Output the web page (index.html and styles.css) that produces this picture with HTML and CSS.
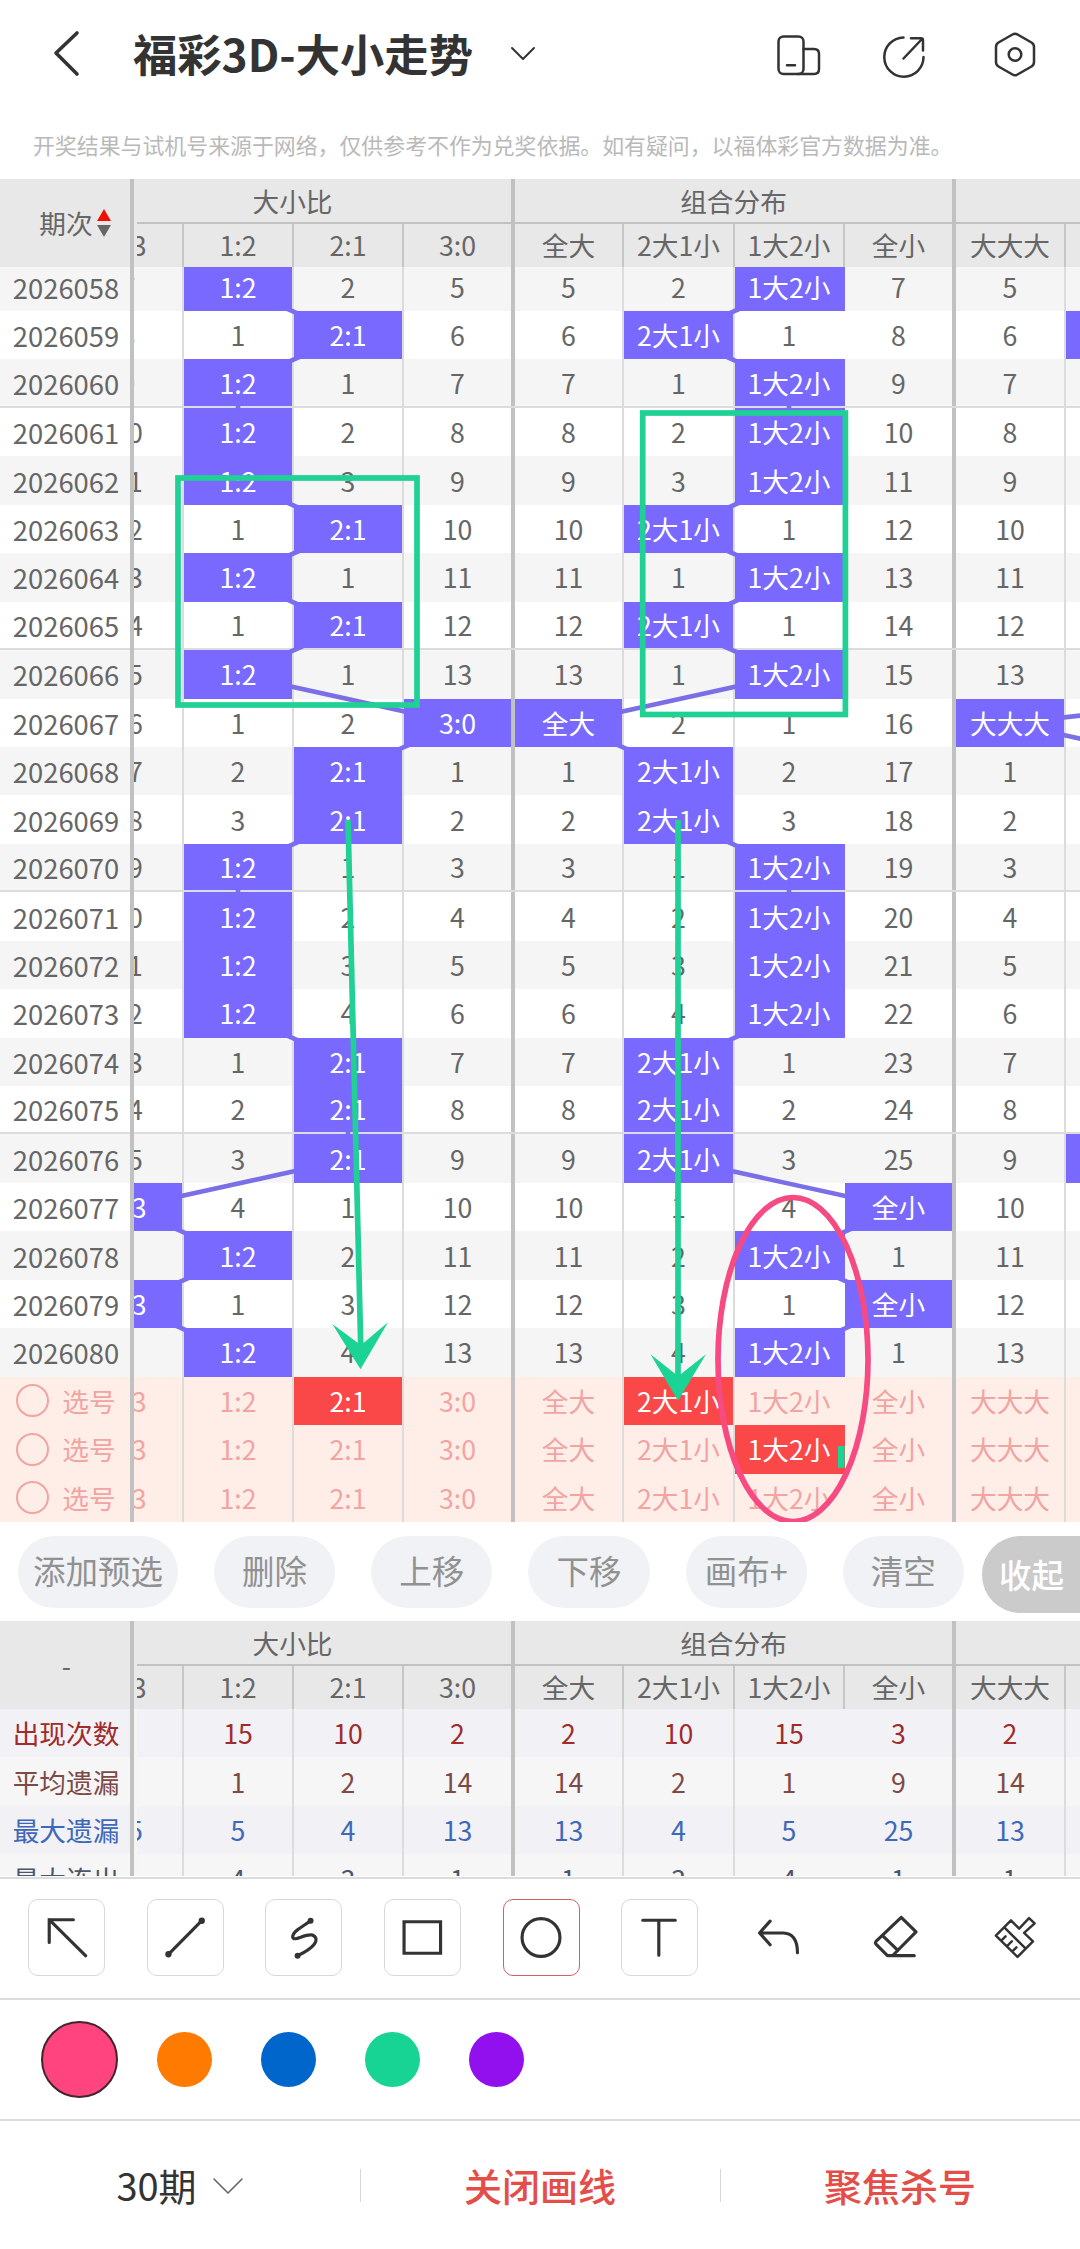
FILE: index.html
```html
<!DOCTYPE html>
<html lang="zh-CN">
<head>
    <meta charset="UTF-8">
    <meta name="viewport" content="width=device-width, initial-scale=1">
    <title>福彩3D-大小走势</title>
    <link rel="stylesheet" href="styles.css">
</head>
<body>
<header class="topbar">
    <svg class="back" width="30" height="50" viewBox="0 0 30 50"><path d="M26 4 5 24 26 45"/></svg>
    <h1>福彩3D-大小走势</h1>
    <svg class="drop" width="28" height="18" viewBox="0 0 28 18"><path d="M3 3 14 14 25 3"/></svg>
    <div class="actions">
        <svg width="48" height="48" viewBox="0 0 48 48"><rect x="4.5" y="6.5" width="25" height="37.5" rx="5"/><path d="M29.5 19H40q5 0 5 5V39q0 5-5 5H24M13 35.3h8"/></svg>
        <svg class="share" width="48" height="48" viewBox="0 0 48 48"><path d="M23.5 7.5A19.6 19.6 0 1 0 43.5 27M23.5 28.5 42 9M31 8.2H41q2 0 2 2V20.500"/></svg>
        <svg width="48" height="48" viewBox="0 0 48 48"><path d="M21.500 4.500Q24 3 26.500 4.500L40.500 12.500Q43 14 43 17V32Q43 35 40.500 36.500L26.500 44.500Q24 46 21.500 44.500L7.500 36.500Q5 35 5 32V17Q5 14 7.500 12.500Z"/><circle cx="24" cy="24.500" r="6.300"/></svg>
    </div>
</header>
<p class="notice">开奖结果与试机号来源于网络，仅供参考不作为兑奖依据。如有疑问，以福体彩官方数据为准。</p>

<section class="chart" id="trend">
    <div class="side">
        <div class="side-head">期次<span class="sort"><i class="up"></i><i class="down"></i></span></div>
        <div class="side-body"><div class="rows"></div></div>
    </div>
    <div class="scroll">
        <div class="head"></div>
        <div class="body">
            <div class="rows"></div>
            <svg class="links" width="1166" height="1260"></svg>
        </div>
    </div>
    <svg class="canvas" width="1080" height="1343" viewBox="0 179 1080 1343">
        <g class="green">
            <rect x="178" y="478" width="239" height="227"/>
            <rect x="642.700" y="413" width="202.700" height="301.500"/>
            <path d="M348 820 360.700 1345M678 820V1376"/>
            <path class="solid" d="M360.500 1369.300 332.300 1324 358 1343H363.500L388 1322.300ZM678 1400.700 650.500 1354.300 675.500 1374H681L706 1354.300ZM838 1446h6.600v21.700H838Z"/>
        </g>
        <ellipse class="pink" cx="793" cy="1359.500" rx="75" ry="162"/>
    </svg>
</section>

<nav class="edit">
    <button class="wide">添加预选</button>
    <button>删除</button>
    <button>上移</button>
    <button>下移</button>
    <button>画布+</button>
    <button>清空</button>
    <button class="fold">收起</button>
</nav>

<section class="chart" id="stats">
    <div class="side">
        <div class="side-head">-</div>
        <div class="side-body"><div class="rows"></div></div>
    </div>
    <div class="scroll">
        <div class="head"></div>
        <div class="body"><div class="rows"></div></div>
    </div>
</section>

<div class="tools">
    <svg class="tool" viewBox="0 0 76 76"><path class="sq" d="M45 20H20.500V43M20.500 20 57.500 56.500"/></svg>
    <svg class="tool" viewBox="0 0 76 76"><path d="M54.500 21 20.700 55"/><circle class="dot" cx="54.500" cy="21" r="3.200"/><circle class="dot" cx="20.700" cy="55" r="3.200"/></svg>
    <svg class="tool" viewBox="0 0 76 76"><path d="M45 21C38 27 27 31 27 37.500 28 43 39 34 47 35.500 56 40 48 49 32 56.500"/><circle class="dot" cx="45.200" cy="21" r="3"/><circle class="dot" cx="32" cy="56.500" r="3"/></svg>
    <svg class="tool" viewBox="0 0 76 76"><path class="sq" d="M19.300 22h37v32h-37Z"/></svg>
    <svg class="tool on" viewBox="0 0 76 76"><circle cx="37.500" cy="38" r="19.200"/></svg>
    <svg class="tool" viewBox="0 0 76 76"><path d="M21 20.500H54M37.300 20.500V56"/></svg>
    <svg class="tool bare" viewBox="0 0 76 76"><path d="M29.500 21.400 18.800 33.400 29.500 45.400M18.800 33.400H43Q57.200 34 57.200 53.400"/></svg>
    <svg class="tool bare" viewBox="0 0 76 76"><path d="M42.800 17.700 57.800 32.400 34.400 56M42.800 17.700 17.200 42Q16.200 43.400 17.200 44.800L28.800 56.400H56M24.400 36.700 39.400 51"/></svg>
    <svg class="tool bare thin" viewBox="0 0 76 76"><path d="M18.100 36 33.400 20.700 41.700 29 51.700 18.400 57.400 23.700 46.700 33.400 55.700 42 40.100 57.700ZM27.400 28.400 48.100 49M24.100 40.700l3.800-3.800M29.700 46.400l4.600-4.600M35.100 51.700l3.800-3.800"/></svg>
</div>

<div class="palette">
    <span class="color c1 on"></span>
    <span class="color c2"></span>
    <span class="color c3"></span>
    <span class="color c4"></span>
    <span class="color c5"></span>
</div>

<footer class="bottom">
    <div class="item">30期<svg width="32" height="20" viewBox="0 0 32 20"><path d="M2 3 16 17 30 3"/></svg></div>
    <div class="item red">关闭画线</div>
    <div class="item red">聚焦杀号</div>
</footer>
<script src="script.js"></script>
</body>
</html>
```
FILE: styles.css
```css
* {
    box-sizing: border-box;
}

body {
    margin: 0;
    width: 1080px;
    height: 2249px;
    overflow: hidden;
    background: #fff;
    color: #666;
    font-family: "Noto Sans CJK SC", "Noto Sans", sans-serif;
    font-size: 26.7px;
}

svg {
    display: block;
    fill: none;
    stroke: #333;
    stroke-width: 3;
    stroke-linecap: round;
    stroke-linejoin: round;
}

/* top bar */
.topbar {
    height: 108px;
    padding: 0 41px 0 51px;
    display: flex;
    align-items: center;
}

.topbar h1 {
    margin: -2px 36px 0 52px;
    font-size: 44.3px;
    line-height: 60px;
    font-weight: 700;
    color: #333;
    white-space: nowrap;
}

.topbar .back {
    stroke-width: 3.6;
}

.topbar .drop {
    stroke-width: 2;
}

.actions {
    margin-left: auto;
    display: flex;
}

.actions svg {
    stroke-width: 2.5;
}

.actions .share {
    margin: 0 63px 0 58px;
}

.notice {
    margin: 0;
    height: 71px;
    padding: 21px 0 0 33px;
    font-size: 21.9px;
    line-height: 32px;
    color: #b9b9b9;
    white-space: nowrap;
}

/* charts */
.chart {
    position: relative;
    display: flex;
    height: 1343px;
    overflow: hidden;
    line-height: 40px;
}

.side {
    width: 134px;
    flex: none;
    display: flex;
    flex-direction: column;
    border-right: 4px solid #c1c1c1;
}

.side-head {
    height: 88px;
    flex: none;
    display: flex;
    align-items: center;
    justify-content: center;
    background: #e8e8e8;
    padding-left: 20px;
}

.sort {
    display: flex;
    flex-direction: column;
    gap: 4px;
    margin-left: 4px;
}

.sort i {
    border: 6.500px solid transparent;
    border-left-width: 7px;
    border-right-width: 7px;
}

.sort .up {
    border-top: 0;
    border-bottom: 12px solid #f00f00;
}

.sort .down {
    border-bottom: 0;
    border-top: 12px solid #666;
}

.side-body {
    flex: 1;
    min-height: 0;
    overflow: hidden;
}

.side .row {
    display: flex;
    align-items: center;
    justify-content: center;
    padding-left: 2px;
}

.side .issue {
    font-size: 27.4px;
}

.scroll {
    flex: 1;
    min-width: 0;
    display: flex;
    flex-direction: column;
    overflow: hidden;
}

/* the table is scrolled, the first column starts 60px left of the viewport */
.head {
    height: 88px;
    flex: none;
    margin-left: 3px;
    background: #e8e8e8;
    box-shadow: -3px 0 #e8e8e8;
    overflow: hidden;
}

.group-row,
.name-row,
.scroll .row {
    display: grid;
    width: 1102px;
    margin-left: -60px;
    grid-template-columns: 110px 110px 110px 111px 109px 111px 110px 111px 110px 110px;
}

.group-row,
.name-row {
    margin-left: -63px;
    text-align: center;
}

.group-row {
    height: 45px;
}

.name-row {
    height: 43px;
}

.group-row span {
    grid-column: span 4;
    line-height: 43px;
    border-bottom: 2px solid #c1c1c1;
    border-right: 4px solid #c1c1c1;
}

.group-row span:last-child {
    grid-column: span 2;
}

.name-row span {
    line-height: 42px;
    border-right: 2px solid #c6c6c6;
}

.name-row .edge,
.scroll .row .edge {
    border-right: 4px solid #c1c1c1;
}

.body {
    position: relative;
    flex: 1;
    min-height: 0;
    overflow: hidden;
}

.row {
    height: 48.45px;
    white-space: nowrap;
}

.row:nth-child(odd) {
    background: #f5f5f5;
}

.cell {
    border-right: 2px solid #dcdcdc;
    display: flex;
    min-width: 0;
}

.cell.open {
    border-right: 0;
}

.cell span {
    flex: 1;
    display: flex;
    align-items: center;
    justify-content: center;
}

.cell.open span {
    padding-right: 2px;
}

.row.fifth {
    border-bottom: 2px solid #dcdcdc;
}

.hit span {
    position: relative;
    z-index: 2;
    background: #7969ff;
    color: #fff;
}

#trend .rows {
    margin-top: -4.4px;
}

#trend .row.pick {
    background: #ffeee8;
    color: #f1a4a2;
}

.pick .hit span {
    background: #fa4848;
    color: #fff;
}

.ring {
    width: 33px;
    height: 33px;
    margin-right: 13px;
    border: 2px solid #f1a4a2;
    border-radius: 50%;
}

.links {
    position: absolute;
    left: -60px;
    top: -4.4px;
    stroke: #7a6fe6;
    stroke-width: 4.6;
    stroke-linecap: butt;
}

.canvas {
    position: absolute;
    left: 0;
    top: 0;
    z-index: 3;
    stroke-width: 5.7;
    stroke-linecap: butt;
    stroke-linejoin: miter;
}

.green {
    stroke: #20d095;
}

.green .solid {
    fill: #1ad394;
    stroke: none;
}

.pink {
    stroke: #f64b82;
}

#stats {
    height: 255px;
}

#stats .side-head {
    padding-left: 3px;
}

#stats .scroll {
    background: #f5f5f5;
}

#stats .row:nth-child(odd) {
    background: #f1f1f6;
}

#stats .row:nth-child(even) {
    background: #f6f6f6;
}

#stats .scroll .body {
    margin-left: 3px;
}

#stats .scroll .row {
    margin-left: -63px;
}

#stats .row:nth-child(1) {
    color: #a02b2b;
}

#stats .row:nth-child(2) {
    color: #7e4a46;
}

#stats .row:nth-child(3) {
    color: #4068b8;
}

#stats .row:nth-child(4) {
    color: #4b566c;
}

/* edit buttons */
.edit {
    height: 99px;
    padding: 14px 0 0 18px;
    display: flex;
    align-items: flex-start;
    gap: 36px;
    overflow: hidden;
}

.edit button {
    flex: none;
    width: 121.200px;
    height: 72px;
    padding: 0 0 6px;
    border: 0;
    border-radius: 36px;
    background: #f0f2f5;
    color: #919191;
    font-family: inherit;
    font-size: 32.500px;
    white-space: nowrap;
}

.edit .wide {
    width: 160px;
}

.edit .fold {
    width: 130px;
    height: 77px;
    margin-left: -18px;
    padding: 0 0 3px 17px;
    border-radius: 38px 0 0 38px;
    background: #cbcbcb;
    color: #fff;
    font-weight: 500;
    text-align: left;
}

/* drawing tools */
.tools {
    height: 123px;
    margin-top: 1px;
    padding: 20px 26px 0 28px;
    border-top: 2px solid #dcdcdc;
    border-bottom: 2px solid #dcdcdc;
    display: flex;
    justify-content: space-between;
}

.tool {
    width: 77px;
    height: 77px;
    border: 1px solid #d8d8d8;
    border-radius: 10px;
    stroke-width: 3.200;
}

.tool.on {
    border-color: #d0625c;
}

.tool.bare {
    border-color: transparent;
}

.tool.thin {
    stroke-width: 2.500;
}

.tool .sq {
    stroke-linejoin: miter;
}

.tool .dot {
    fill: #333;
    stroke: none;
}

.palette {
    height: 121px;
    padding: 0 0 1px 27px;
    border-bottom: 2px solid #dcdcdc;
    display: grid;
    grid-template-columns: 105px repeat(4, 104.200px);
    align-items: center;
    justify-items: center;
}

.color {
    width: 55px;
    height: 55px;
    border-radius: 50%;
}

.color.on {
    width: 77px;
    height: 77px;
    border: 2px solid #40252f;
}

.c1 { background: #ff447f; }
.c2 { background: #ff7a00; }
.c3 { background: #0066cc; }
.c4 { background: #18d494; }
.c5 { background: #9210ee; }

/* bottom bar */
.bottom {
    height: 128px;
    padding-top: 1px;
    display: grid;
    grid-template-columns: repeat(3, 1fr);
    align-items: center;
    font-size: 38px;
    line-height: 56px;
    color: #333;
}

.item {
    display: flex;
    align-items: center;
    justify-content: center;
    position: relative;
    padding-bottom: 2px;
}

.item svg {
    margin: 2px 0 0 15px;
    stroke: #666;
    stroke-width: 1.600;
}

.item.red {
    color: #e54d49;
    font-weight: 500;
}

.item.red::before {
    content: "";
    position: absolute;
    left: 0;
    top: 12px;
    width: 1px;
    height: 33px;
    background: #d6d6d6;
}
```
FILE: script.js
```js
const names = ['0:3', '1:2', '2:1', '3:0', '全大', '2大1小', '1大2小', '全小', '大大大', ''];
const widths = [110, 110, 110, 111, 109, 111, 110, 111, 110, 110];
const ROW = 48.45;

// one row per issue, x marks the column that was hit
const issues = [
    [2026058, 7, 'x', 2, 5, 5, 2, 'x', 7, 5, ''],
    [2026059, 8, 1, 'x', 6, 6, 'x', 1, 8, 6, 'x'],
    [2026060, 9, 'x', 1, 7, 7, 1, 'x', 9, 7, ''],
    [2026061, 10, 'x', 2, 8, 8, 2, 'x', 10, 8, ''],
    [2026062, 11, 'x', 3, 9, 9, 3, 'x', 11, 9, ''],
    [2026063, 12, 1, 'x', 10, 10, 'x', 1, 12, 10, ''],
    [2026064, 13, 'x', 1, 11, 11, 1, 'x', 13, 11, ''],
    [2026065, 14, 1, 'x', 12, 12, 'x', 1, 14, 12, ''],
    [2026066, 15, 'x', 1, 13, 13, 1, 'x', 15, 13, ''],
    [2026067, 16, 1, 2, 'x', 'x', 2, 1, 16, 'x', ''],
    [2026068, 17, 2, 'x', 1, 1, 'x', 2, 17, 1, ''],
    [2026069, 18, 3, 'x', 2, 2, 'x', 3, 18, 2, ''],
    [2026070, 19, 'x', 1, 3, 3, 1, 'x', 19, 3, ''],
    [2026071, 20, 'x', 2, 4, 4, 2, 'x', 20, 4, ''],
    [2026072, 21, 'x', 3, 5, 5, 3, 'x', 21, 5, ''],
    [2026073, 22, 'x', 4, 6, 6, 4, 'x', 22, 6, ''],
    [2026074, 23, 1, 'x', 7, 7, 'x', 1, 23, 7, ''],
    [2026075, 24, 2, 'x', 8, 8, 'x', 2, 24, 8, ''],
    [2026076, 25, 3, 'x', 9, 9, 'x', 3, 25, 9, 'x'],
    [2026077, 'x', 4, 1, 10, 10, 1, 4, 'x', 10, ''],
    [2026078, 1, 'x', 2, 11, 11, 2, 'x', 1, 11, ''],
    [2026079, 'x', 1, 3, 12, 12, 3, 1, 'x', 12, ''],
    [2026080, 1, 'x', 4, 13, 13, 4, 'x', 1, 13, '']
];

// preselected columns of each 选号 row
const picks = [[2, 5], [6], []];

const stats = [
    ['出现次数', 3, 15, 10, 2, 2, 10, 15, 3, 2, ''],
    ['平均遗漏', 9, 1, 2, 14, 14, 2, 1, 9, 14, ''],
    ['最大遗漏', 25, 5, 4, 13, 13, 4, 5, 25, 13, ''],
    ['最大连出', 1, 4, 3, 1, 1, 3, 4, 1, 1, '']
];

function cell(text, col, hit) {
    let cls = 'cell';
    if (col === 3 || col === 7) cls += ' edge';
    if (col === 6) cls += ' open';
    if (hit) cls += ' hit';
    return `<div class="${cls}"><span>${text}</span></div>`;
}

function addRow(id, side, cells, cls) {
    document.querySelector(`${id} .side .rows`).innerHTML += `<div class="row ${cls}">${side}</div>`;
    document.querySelector(`${id} .scroll .rows`).innerHTML += `<div class="row ${cls}">${cells}</div>`;
}

document.querySelectorAll('.head').forEach(head => {
    head.innerHTML = `
        <div class="group-row"><span>大小比</span><span>组合分布</span><span></span></div>
        <div class="name-row">${names.map((n, i) => `<span class="${i === 3 || i === 7 ? 'edge' : ''}">${n}</span>`).join('')}</div>`;
});

issues.forEach(([issue, ...values], n) => {
    const cells = values.map((v, i) => v === 'x' ? cell(names[i], i, true) : cell(v, i, false)).join('');
    const last = n === issues.length - 1;
    addRow('#trend', `<span class="issue">${issue}</span>`, cells, issue % 5 === 0 && !last ? 'fifth' : '');
});

picks.forEach(cols => {
    const cells = names.map((n, i) => cell(n, i, cols.includes(i))).join('');
    addRow('#trend', '<i class="ring"></i>选号', cells, 'pick');
});

stats.forEach(([name, ...values]) => {
    addRow('#stats', name, values.map((v, i) => cell(v, i, false)).join(''), '');
});

// lines between the hits of neighbouring issues
function center(col) {
    let x = 0;
    for (let i = 0; i < col; i++) x += widths[i] || 110;
    return x + 54;
}

let lines = '';

function link(row, from, to) {
    lines += `<line x1="${center(from)}" y1="${(row + 0.5) * ROW}" x2="${center(to)}" y2="${(row + 1.5) * ROW}"/>`;
}

[[1, 5], [5, 9]].forEach(([start, end]) => {
    for (let r = 0; r < issues.length - 1; r++) {
        const from = issues[r].slice(start, end).indexOf('x');
        const to = issues[r + 1].slice(start, end).indexOf('x');
        link(r, start - 1 + from, start - 1 + to);
    }
});
link(8, 12, 8);
link(9, 8, 10);
document.querySelector('.links').innerHTML = lines;
```
